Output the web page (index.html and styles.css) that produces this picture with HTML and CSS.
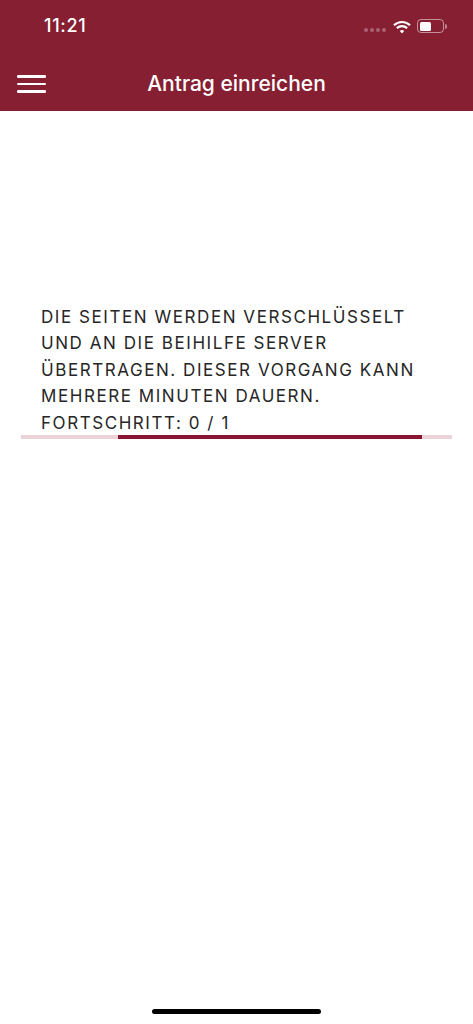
FILE: index.html
```html
<!DOCTYPE html>
<html lang="de">
<head>
<meta charset="utf-8">
<title>Antrag einreichen</title>
<link rel="stylesheet" href="styles.css">
</head>
<body>
<div class="screen">
  <header class="header">
    <div class="status">
      <span class="time">11:21</span>
      <div class="status-icons">
        <div class="dots"><i></i><i></i><i></i><i></i></div>
        <svg class="wifi" width="18" height="14" viewBox="0 0 18 14"><path d="M1 5.2a11.6 11.6 0 0 1 16 0" fill="none" stroke="#fff" stroke-width="2.2"/><path d="M3.9 8.1a7.4 7.4 0 0 1 10.200 0" fill="none" stroke="#fff" stroke-width="2.2"/><path d="M6.800 11a3.200 3.200 0 0 1 4.400 0L9 13.400z" fill="#fff"/></svg>
        <div class="battery"><div class="battery-body"><div class="battery-level"></div></div><div class="battery-cap"></div></div>
      </div>
    </div>
    <div class="toolbar">
      <div class="menu"><i></i><i></i><i></i></div>
      <h1 class="title">Antrag einreichen</h1>
    </div>
  </header>
  <main class="main">
    <p class="message">DIE SEITEN WERDEN VERSCHLÜSSELT UND AN DIE BEIHILFE SERVER ÜBERTRAGEN. DIESER VORGANG KANN MEHRERE MINUTEN DAUERN.<br>FORTSCHRITT: 0 / 1</p>
    <div class="progress"><div class="progress-fill"></div></div>
  </main>
  <div class="home"><div class="home-bar"></div></div>
</div>
</body>
</html>
```
FILE: styles.css
```css
* { box-sizing: border-box; }
html, body { margin: 0; padding: 0; background: #fff; }
body { font-family: Inter, "Liberation Sans", sans-serif; }
.screen { width: 473px; height: 1024px; display: flex; flex-direction: column; overflow: hidden; }
.header { height: 111px; background: #871f33; color: #fff; flex: none; }
.status { height: 52px; display: flex; align-items: center; justify-content: space-between; padding: 0 26px 0 44px; }
.time { font-size: 18px; font-weight: 500; line-height: 52px; letter-spacing: .7px; }
.status-icons { display: flex; align-items: center; }
.dots { display: flex; gap: 2px; margin-right: 7px; margin-top: 8px; }
.dots i { width: 4px; height: 4px; border-radius: 50%; background: rgba(255,255,255,.3); }
.wifi { margin-right: 6px; margin-top: 1px; }
.battery { display: flex; align-items: center; }
.battery-body { width: 27px; height: 14px; border: 1px solid rgba(255,255,255,.5); border-radius: 4px; padding: 1.500px; }
.battery-level { width: 11px; height: 100%; background: #fff; border-radius: 1.500px; }
.battery-cap { width: 2px; height: 5px; margin-left: 1px; background: rgba(255,255,255,.45); border-radius: 0 2px 2px 0; }
.toolbar { height: 59px; position: relative; display: flex; align-items: center; justify-content: center; }
.menu { position: absolute; left: 17px; top: 23px; width: 29px; display: flex; flex-direction: column; gap: 5px; }
.menu i { display: block; height: 2.500px; background: #fff; border-radius: 1.250px; }
.title { margin: 0; font-size: 21px; font-weight: 500; line-height: 1; position: relative; top: 2px; }
.main { flex: 1; padding: 193px 21px 0; }
.message { margin: 0; padding: 0 20px; font-size: 17px; line-height: 26.400px; letter-spacing: 1.560px; color: #262626; }
.progress { height: 4px; margin-top: -1px; background: #ecd3da; padding: 0 30px 0 97px; }
.progress-fill { height: 100%; background: #8a1530; }
.home { flex: none; height: 24px; padding: 0 152px; }
.home-bar { height: 5px; margin-top: 9px; background: #000; border-radius: 3px; }
```
